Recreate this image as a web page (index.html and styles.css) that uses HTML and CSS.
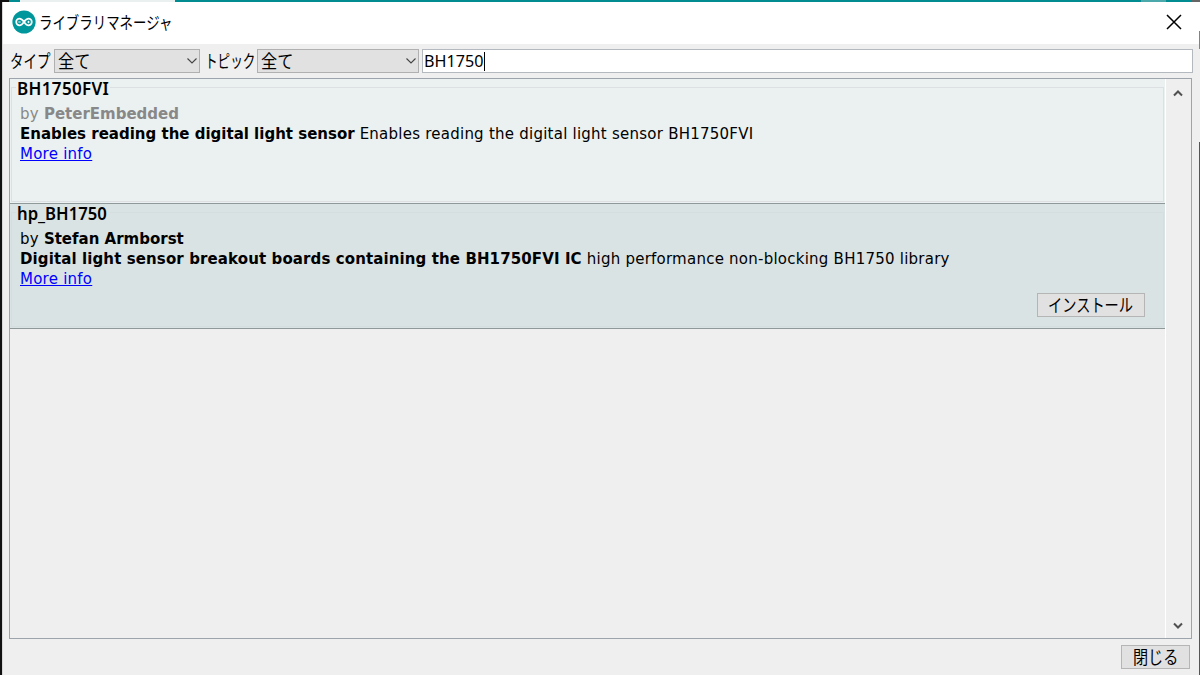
FILE: index.html
```html
<!DOCTYPE html>
<html lang="ja">

<head>
  <meta charset="UTF-8">
  <title>ライブラリマネージャ</title>
  <link rel="stylesheet" href="styles.css">
</head>

<body>

  <div class="desktop">
    <div class="top-strip"></div>
    <div class="window">

      <!-- Title bar -->
      <header class="titlebar">
        <svg class="logo" viewBox="0 0 24 24">
          <circle cx="12" cy="12" r="11.6" fill="#00979c"/>
          <path d="M12 12C10.500 9.800 9.300 8.700 7.500 8.700a3.300 3.300 0 0 0 0 6.600C9.300 15.300 10.500 14.200 12 12S14.700 8.700 16.500 8.700a3.300 3.300 0 0 1 0 6.600C14.700 15.300 13.500 14.200 12 12Z" fill="none" stroke="#fff" stroke-width="1.700"/>
          <path d="M6.300 12h2.400M15.300 12h2.400M16.500 10.800v2.400" stroke="#fff" stroke-width="0.900"/>
        </svg>
        <h1 class="title"><span class="jp jp-title">ライブラリマネージャ</span></h1>
        <svg class="close" viewBox="0 0 16 16">
          <path d="M1 1l14 14M15 1L1 15" stroke="#000" stroke-width="1.500"/>
        </svg>
      </header>

      <!-- Filters -->
      <div class="toolbar">
        <label class="label label-type"><span class="jp jp-type">タイプ</span></label>
        <div class="select select-type">
          <span class="jp jp-all">全て</span>
          <svg class="chevron" viewBox="0 0 12 8"><path d="M1.500 1.500L6 6l4.500-4.500" fill="none" stroke="#444" stroke-width="1.100"/></svg>
        </div>
        <label class="label label-topic"><span class="jp jp-topic">トピック</span></label>
        <div class="select select-topic">
          <span class="jp jp-all">全て</span>
          <svg class="chevron" viewBox="0 0 12 8"><path d="M1.500 1.500L6 6l4.500-4.500" fill="none" stroke="#444" stroke-width="1.100"/></svg>
        </div>
        <div class="search"><span class="query">BH1750</span><i class="caret"></i></div>
      </div>

      <!-- Library list -->
      <div class="list">
        <div class="items">
          <section class="item">
            <fieldset class="group">
              <legend class="name"><span class="name-text">BH1750FVI</span></legend>
              <p class="line author muted">by <b>PeterEmbedded</b></p>
              <p class="line"><b>Enables reading the digital light sensor</b> Enables reading the digital light sensor BH1750FVI</p>
              <p class="line"><a class="link" href="#">More info</a></p>
            </fieldset>
          </section>
          <section class="item selected">
            <fieldset class="group">
              <legend class="name"><span class="name-text">hp_BH1750</span></legend>
              <p class="line author">by <b>Stefan Armborst</b></p>
              <p class="line"><b class="summary">Digital light sensor breakout boards containing the BH1750FVI IC</b> high performance non-blocking BH1750 library</p>
              <p class="line"><a class="link" href="#">More info</a></p>
              <div class="actions">
                <button class="button install"><span class="jp jp-install">インストール</span></button>
              </div>
            </fieldset>
          </section>
        </div>
        <div class="scrollbar">
          <svg class="arrow" viewBox="0 0 10 8"><path d="M1 6.500L5 2.500l4 4" fill="none" stroke="#505050" stroke-width="2"/></svg>
          <svg class="arrow" viewBox="0 0 10 8"><path d="M1 1.500l4 4 4-4" fill="none" stroke="#505050" stroke-width="2"/></svg>
        </div>
      </div>

      <footer class="footer">
        <button class="button done"><span class="jp jp-done">閉じる</span></button>
      </footer>
    </div>
    <div class="right-edge"></div>
  </div>

</body>

</html>
```
FILE: styles.css
```css
* {
  box-sizing: border-box;
}

body {
  margin: 0;
  background: #efefef;
  color: #000;
  font-family: "DejaVu Sans", sans-serif;
  font-size: 15px;
  overflow: hidden;
}

.desktop {
  display: grid;
  grid-template-columns: 2px 1197px 1px;
  grid-template-rows: 2px 673px;
  width: 1200px;
  height: 675px;
  background: #111;
}

.top-strip {
  grid-column: 1 / 4;
  background: linear-gradient(to right, #111 0 9px, #008c91 9px 20px, #eaf0f0 20px 175px, #008c91 175px 1141px, #4ba9ac 1141px 1166px, #008c91 1166px 1192px, #666 1192px);
}

.window {
  grid-column: 2;
  display: flex;
  flex-direction: column;
  background: #efefef;
  border-left: 1px solid #d8d8d8;
}

.right-edge {
  background: linear-gradient(#fff 0 29px, #6788b5 29px 47px, #efefef 47px 140px, #555 140px);
}

.titlebar {
  display: flex;
  align-items: center;
  height: 42px;
  padding: 0 17px 2px 8.5px;
  background: #fff;
}

.logo {
  width: 24px;
  height: 24px;
}

.title {
  flex: 1;
  margin: 0 0 0 3.5px;
  font-size: 17px;
  font-weight: normal;
}

.close {
  width: 16px;
  height: 16px;
}

/* Narrow UI kana */
.jp {
  display: inline-block;
  font-family: "Noto Sans CJK JP", sans-serif;
  font-size: 18px;
  line-height: 22px;
  white-space: nowrap;
  transform-origin: left center;
}

.jp-title {
  font-size: 17px;
  transform: scaleX(0.79);
}

.jp-type {
  width: 44px;
  transform: scaleX(0.75);
}

.jp-topic {
  width: 52px;
  transform: scaleX(0.7);
}

.jp-all {
  line-height: 20px;
  padding-bottom: 2px;
  transform: scaleX(0.9);
}

.jp-install {
  transform: scaleX(0.79);
}

.jp-done {
  transform: scaleX(0.84);
}

.toolbar {
  display: flex;
  height: 34px;
  padding: 5px 6px 5px 7px;
}

.label-type {
  width: 44px;
}

.label-topic {
  width: 52px;
  margin-left: 5px;
}

.select {
  display: flex;
  align-items: center;
  justify-content: space-between;
  height: 24px;
  padding: 0 1px 0 3px;
  background: #e1e1e1;
  border: 1px solid #b0b0b0;
}

.select-type {
  width: 146px;
}

.select-topic {
  width: 162px;
}

.chevron {
  width: 12px;
  height: 8px;
}

.search {
  display: flex;
  flex: 1;
  align-items: center;
  height: 24px;
  margin-left: 3px;
  padding-left: 1px;
  background: #fff;
  border: 1px solid #b4b9bf;
}

.query {
  width: 60px;
  font-family: "Noto Sans", sans-serif;
  font-size: 17px;
  line-height: 22px;
  transform: scaleX(0.95);
  transform-origin: left center;
}

.caret {
  width: 1px;
  height: 19px;
  background: #000;
}

.list {
  display: flex;
  height: 561px;
  margin: 0 7px 0 6px;
  border: 1px solid #9da4ab;
}

.items {
  flex: 1;
}

.item {
  height: 125px;
  padding: 0 1px 1px;
  background: #ebf1f1;
  border-bottom: 1px solid #8f9999;
}

.selected {
  background: #dae3e3;
}

.group {
  height: 123px;
  margin: 0;
  padding: 0 8px;
  border: 1px solid #dce0e2;
}

.selected .group {
  border-color: #d6dddf;
}

/* Shorter than its line so the group border sits above the middle of the text */
.name {
  height: 17px;
  margin-left: -4px;
  padding: 0 1px;
  font-family: "Noto Sans", sans-serif;
  font-size: 17px;
  font-weight: 600;
  line-height: 20px;
}

.name-text {
  display: inline-block;
  letter-spacing: 0.35px;
  transform-origin: left center;
}

.selected .name-text {
  letter-spacing: 0;
  transform: scaleX(0.98);
}

.line {
  margin: 0;
  letter-spacing: 0.24px;
  line-height: 20px;
  white-space: nowrap;
}

.line b {
  letter-spacing: 0;
}

.line .summary {
  letter-spacing: 0.11px;
}

.author {
  margin-top: 8px;
}

.muted {
  color: #888;
}

.link {
  color: #0000ff;
}

.actions {
  display: flex;
  justify-content: flex-end;
  margin: 4px 10px 0 0;
}

.button {
  display: flex;
  align-items: center;
  height: 24px;
  padding: 0 0 2px 10px;
  background: #e1e1e1;
  border: 1px solid #b5b5b5;
}

.install {
  width: 108px;
}

.done {
  width: 69px;
  padding-left: 11px;
}

.scrollbar {
  display: flex;
  flex-direction: column;
  align-items: center;
  justify-content: space-between;
  width: 26px;
  padding: 10px 1px 8px 0;
  border-left: 1px solid #fff;
}

.arrow {
  width: 10px;
  height: 8px;
}

.footer {
  display: flex;
  justify-content: flex-end;
  padding: 6px 9px 0 0;
}
```
